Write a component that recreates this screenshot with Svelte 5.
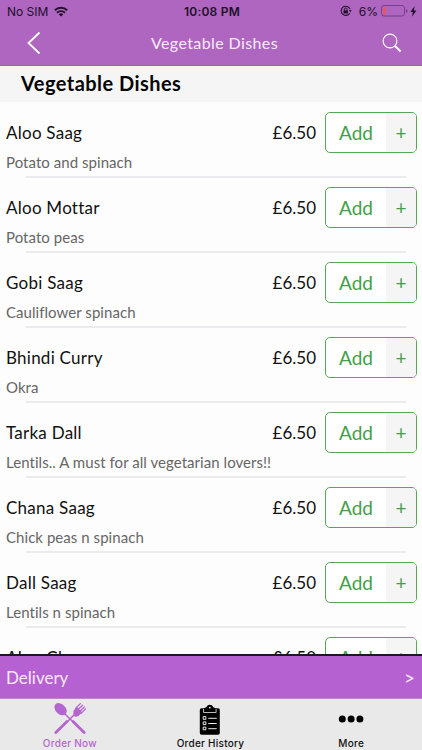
<script>
  let dishes = [
    { name: 'Aloo Saag', info: 'Potato and spinach', price: '£6.50' },
    { name: 'Aloo Mottar', info: 'Potato peas', price: '£6.50' },
    { name: 'Gobi Saag', info: 'Cauliflower spinach', price: '£6.50' },
    { name: 'Bhindi Curry', info: 'Okra', price: '£6.50' },
    { name: 'Tarka Dall', info: 'Lentils.. A must for all vegetarian lovers!!', price: '£6.50' },
    { name: 'Chana Saag', info: 'Chick peas n spinach', price: '£6.50' },
    { name: 'Dall Saag', info: 'Lentils n spinach', price: '£6.50' },
    { name: 'Aloo Chana', info: '', price: '£6.50' }
  ];
</script>

<main class="screen">
  <header>
    <div class="status">
      <div class="carrier">
        <span>No SIM</span>
        <svg width="14" height="11" viewBox="0 0 14 11" fill="none" stroke="#211029">
          <path d="M.8 4.2a9 9 0 0 1 12.4 0" stroke-width="2" />
          <path d="M3 6.7a5.8 5.8 0 0 1 8 0" stroke-width="1.9" />
          <path d="M7 10.6 4.8 8.4a3.2 3.2 0 0 1 4.4 0z" fill="#211029" stroke="none" />
        </svg>
      </div>
      <div class="time">10:08 PM</div>
      <div class="power">
        <svg class="lock" width="12" height="12" viewBox="0 0 12 12" fill="none" stroke="#211029">
          <path d="M9.7 8.2A4.6 4.6 0 1 1 10 4.1" stroke-width="1.1" />
          <path d="m8.8 5.2 2.9 0-1.4 2z" fill="#211029" stroke="none" />
          <rect x="3.5" y="5.3" width="4.4" height="3.2" fill="#211029" stroke="none" />
          <path d="M4.4 5.4V4.3a1.3 1.3 0 0 1 2.6 0v1.1" />
        </svg>
        <span>6%</span>
        <svg class="battery" width="27" height="12" viewBox="0 0 27 12">
          <rect x=".5" y=".5" width="23" height="10.5" rx="2.6" fill="none" stroke="#744087" />
          <path d="M3.3 2h1.2v7.5H3.3A1.5 1.5 0 0 1 2 8V3.5A1.5 1.5 0 0 1 3.3 2z" fill="#f5514f" />
          <path d="M25 4v4q1.5-.6 1.5-2T25 4z" fill="#744087" />
        </svg>
        <svg width="7" height="11" viewBox="0 0 7 11" fill="#211029">
          <path d="M4.7 0 .3 6h2.6l-1 4.8L6.5 4.5H3.8z" />
        </svg>
      </div>
    </div>
    <div class="nav">
      <svg width="14" height="24" viewBox="0 0 14 24" fill="none" stroke="#fff" stroke-width="1.8">
        <path d="M12.5 1.5 1.5 12l11 10.5" />
      </svg>
      <span class="title">Vegetable Dishes</span>
      <svg width="20" height="20" viewBox="0 0 20 20" fill="none" stroke="#fff">
        <circle cx="8" cy="8" r="6.9" stroke-width="1.1" />
        <path d="m12.9 12.9 5.7 5.6" stroke-width="2" />
      </svg>
    </div>
  </header>

  <h1>Vegetable Dishes</h1>

  <ul>
    {#each dishes as dish}
      <li>
        <div class="top">
          <span class="name">{dish.name}</span>
          <span class="price">{dish.price}</span>
          <button>
            <span class="add">Add</span>
            <span class="plus">+</span>
          </button>
        </div>
        <p>{dish.info}</p>
      </li>
    {/each}
  </ul>

  <div class="delivery">
    <span>Delivery</span>
    <span class="arrow">&gt;</span>
  </div>

  <nav class="tabs">
    <div class="tab active">
      <svg width="34" height="34" viewBox="0 0 34 34" fill="#b566ce">
        <ellipse cx="7.6" cy="7.2" rx="5" ry="7.1" transform="rotate(-45 7.6 7.2)" />
        <path d="m11 11 20.5 20" stroke="#b566ce" stroke-width="1.5" />
        <path d="m20 19.6 11.2 11" stroke="#b566ce" stroke-width="2.8" stroke-linecap="round" />
        <path d="m24 10-9.5 9.5" stroke="#b566ce" stroke-width="1.6" />
        <path d="M14 19.6 2.8 30.6" stroke="#b566ce" stroke-width="2.8" stroke-linecap="round" />
        <path d="M20.5 8.5 24 5l5 5-3.5 4q-3 1.5-4.3.1t-.7-5.1z" />
        <path d="m22.5 6.5 4.9-4.9M24.5 8.3l5-5M26.3 10l5-5M27.9 11.6l4.7-4.7" stroke="#b566ce" stroke-width="1.3" stroke-linecap="round" />
      </svg>
      <span>Order Now</span>
    </div>
    <div class="tab">
      <svg width="22" height="32" viewBox="0 0 22 32">
        <rect x=".8" y="4.3" width="20" height="26.5" rx="1.8" />
        <path d="M5 8V5q0-1.4 2.3-1.8Q8.3.8 10.8.8t3.5 2.4q2.3.4 2.3 1.8v3z" />
        <path d="M4.5 5v3.5h12.6V5" fill="none" stroke="#e9e9e9" stroke-width=".8" />
        <circle cx="10.8" cy="3.6" r=".9" fill="#e9e9e9" />
        <g fill="none" stroke="#e9e9e9">
          <path d="M4.2 12.6h2.7v2.7H4.2zM4.2 17.9h2.7v2.7H4.2zM4.2 23.1h2.7v2.7H4.2z" />
          <path d="M9.3 14.3h8.4M9.3 19.5h8.4M9.3 24.7h8.4" />
        </g>
      </svg>
      <span>Order History</span>
    </div>
    <div class="tab">
      <svg width="26" height="32" viewBox="0 0 26 32">
        <circle cx="4.3" cy="15" r="3.5" />
        <circle cx="13.1" cy="15" r="3.5" />
        <circle cx="21.9" cy="15" r="3.5" />
      </svg>
      <span>More</span>
    </div>
  </nav>
</main>

<style>
  :global(body) {
    background: #fdfdfd;
  }

  .screen {
    display: flex;
    flex-direction: column;
    height: 750px;
    overflow: hidden;
    font-family: Lato, sans-serif;
    font-variant-ligatures: none;
    color: #111;
  }

  header {
    flex: none;
    height: 66px;
    box-sizing: border-box;
    background: #ae66c0;
    border-bottom: 1px solid #a25bb3;
  }

  .status {
    display: grid;
    grid-template-columns: 1fr auto 1fr;
    align-items: center;
    height: 22px;
    padding: 0 5px 0 7px;
    font-family: Inter, sans-serif;
    font-size: 12px;
    color: #211029;
  }

  .carrier,
  .power {
    display: flex;
    align-items: center;
  }

  .carrier {
    gap: 6px;
  }

  .time {
    font-weight: 600;
    letter-spacing: 0.2px;
  }

  .power {
    justify-content: flex-end;
  }

  .lock {
    margin-right: 7px;
  }

  .battery {
    margin: 0 2px 0 3px;
  }

  .nav {
    display: flex;
    align-items: center;
    justify-content: space-between;
    height: 42px;
    padding: 0 20px 0 27px;
  }

  .title {
    padding: 0 0 2px 6px;
    font-size: 16px;
    letter-spacing: 0.4px;
    color: #f8eafa;
  }

  h1 {
    flex: none;
    margin: 0;
    height: 36px;
    padding-left: 21px;
    background: #f5f5f5;
    font-size: 20px;
    line-height: 35px;
    letter-spacing: 0.45px;
    color: #050505;
  }

  ul {
    flex: 1;
    min-height: 0;
    margin: 0;
    padding: 1px 0 0;
    overflow: hidden;
    list-style: none;
  }

  li {
    height: 75px;
    box-sizing: border-box;
    padding: 9px 5px 0;
    background: linear-gradient(#ebebed, #ebebed) 26px 100% / 380px 2px no-repeat;
  }

  .top {
    display: flex;
    align-items: center;
    height: 41px;
    font-size: 17px;
  }

  .name {
    flex: 1;
    padding-left: 1px;
    letter-spacing: 0.25px;
  }

  .price {
    margin-right: 9px;
  }

  button {
    display: flex;
    width: 92px;
    height: 41px;
    padding: 0;
    overflow: hidden;
    border: 1px solid #57a756;
    border-radius: 5px;
    background: #fff;
    font-family: inherit;
    color: #43a047;
  }

  .add {
    width: 60px;
    font-size: 19px;
    line-height: 39px;
  }

  .plus {
    flex: 1;
    background: #f5f5f5;
    font-size: 19px;
    line-height: 39px;
  }

  p {
    margin: 0;
    padding-left: 1px;
    font-size: 15px;
    line-height: 18px;
    letter-spacing: 0.05px;
    color: #666;
  }

  .delivery {
    display: flex;
    flex: none;
    align-items: center;
    justify-content: space-between;
    height: 45px;
    box-sizing: border-box;
    padding: 0 7px 0 6px;
    border-top: 2px solid #20142a;
    border-bottom: 1px solid #bd83d0;
    background: #b661d1;
    font-size: 17px;
    color: #f9e9fc;
  }

  .arrow {
    font-size: 19px;
  }

  .tabs {
    display: grid;
    flex: none;
    grid-template-columns: repeat(3, 1fr);
    height: 51px;
    background: #e9e9e9;
    font-family: Inter, sans-serif;
    font-size: 10px;
    font-weight: 500;
    letter-spacing: 0.25px;
  }

  .tab {
    display: flex;
    flex-direction: column;
    align-items: center;
    justify-content: flex-end;
    padding-right: 1px;
    box-sizing: border-box;
    color: #111;
  }

  .tab span {
    line-height: 14px;
  }

  .active {
    color: #b566ce;
  }
</style>
